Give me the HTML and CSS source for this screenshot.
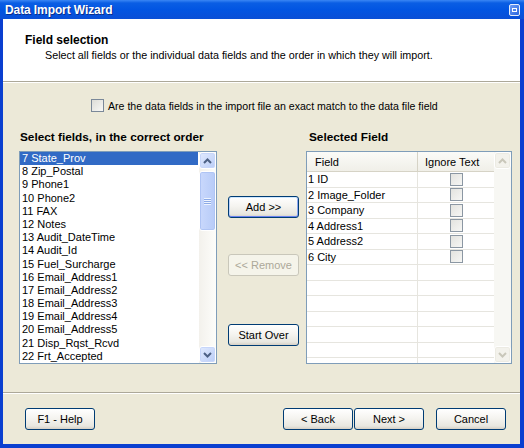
FILE: index.html
```html
<!DOCTYPE html>
<html>
<head>
<meta charset="utf-8">
<title>Data Import Wizard</title>
<link rel="stylesheet" href="styles.css">
</head>
<body>
<div class="window">
  <div class="titlebar">
    <span class="title">Data Import Wizard</span>
    <span class="tb-btn"><span class="tb-glyph"></span></span>
  </div>
  <div class="frame">
    <div class="header">
      <div class="h-title">Field selection</div>
      <div class="h-sub">Select all fields or the individual data fields and the order in which they will import.</div>
    </div>
    <div class="content">
      <div class="match">
        <span class="cb"></span>
        <span class="match-text">Are the data fields in the import file an exact match to the data file field</span>
      </div>
      <div class="panes">
        <div class="left">
          <div class="pane-label">Select fields, in the correct order</div>
          <div class="listbox">
            <ul class="items">
              <li class="sel">7 State_Prov</li>
              <li>8 Zip_Postal</li>
              <li>9 Phone1</li>
              <li>10 Phone2</li>
              <li>11 FAX</li>
              <li>12 Notes</li>
              <li>13 Audit_DateTime</li>
              <li>14 Audit_Id</li>
              <li>15 Fuel_Surcharge</li>
              <li>16 Email_Address1</li>
              <li>17 Email_Address2</li>
              <li>18 Email_Address3</li>
              <li>19 Email_Address4</li>
              <li>20 Email_Address5</li>
              <li>21 Disp_Rqst_Rcvd</li>
              <li>22 Frt_Accepted</li>
            </ul>
            <div class="vs">
              <div class="vs-btn">
                <svg width="9" height="6" viewBox="0 0 9 6"><polyline points="1,5 4.5,1.5 8,5" fill="none" stroke="#4D6185" stroke-width="2"/></svg>
              </div>
              <div class="vs-thumb"><span class="grip"></span></div>
              <div class="vs-track"></div>
              <div class="vs-btn">
                <svg width="9" height="6" viewBox="0 0 9 6"><polyline points="1,1 4.5,4.5 8,1" fill="none" stroke="#4D6185" stroke-width="2"/></svg>
              </div>
            </div>
          </div>
        </div>
        <div class="mid">
          <button class="btn btn-default">Add &gt;&gt;</button>
          <button class="btn btn-disabled remove">&lt;&lt; Remove</button>
          <button class="btn startover">Start Over</button>
        </div>
        <div class="right">
          <div class="pane-label pane-label-right">Selected Field</div>
          <div class="grid">
            <div class="gbody">
              <div class="grow ghead"><div class="c1">Field</div><div class="c2">Ignore Text</div></div>
              <div class="grow"><div class="c1">1 ID</div><div class="c2"><span class="gcb"></span></div></div>
              <div class="grow"><div class="c1">2 Image_Folder</div><div class="c2"><span class="gcb"></span></div></div>
              <div class="grow"><div class="c1">3 Company</div><div class="c2"><span class="gcb"></span></div></div>
              <div class="grow"><div class="c1">4 Address1</div><div class="c2"><span class="gcb"></span></div></div>
              <div class="grow"><div class="c1">5 Address2</div><div class="c2"><span class="gcb"></span></div></div>
              <div class="grow"><div class="c1">6 City</div><div class="c2"><span class="gcb"></span></div></div>
              <div class="grow"><div class="c1"></div><div class="c2"></div></div>
              <div class="grow"><div class="c1"></div><div class="c2"></div></div>
              <div class="grow"><div class="c1"></div><div class="c2"></div></div>
              <div class="grow"><div class="c1"></div><div class="c2"></div></div>
              <div class="grow"><div class="c1"></div><div class="c2"></div></div>
              <div class="grow"><div class="c1"></div><div class="c2"></div></div>
              <div class="grow"><div class="c1"></div><div class="c2"></div></div>
            </div>
            <div class="vs vs-off">
              <div class="vs-btn">
                <svg width="9" height="6" viewBox="0 0 9 6"><polyline points="1,5 4.5,1.5 8,5" fill="none" stroke="#C9C7BA" stroke-width="2"/></svg>
              </div>
              <div class="vs-track"></div>
              <div class="vs-btn">
                <svg width="9" height="6" viewBox="0 0 9 6"><polyline points="1,1 4.5,4.5 8,1" fill="none" stroke="#C9C7BA" stroke-width="2"/></svg>
              </div>
            </div>
          </div>
        </div>
      </div>
    </div>
    <div class="footer">
      <button class="btn fbtn">F1 - Help</button>
      <div class="spacer"></div>
      <button class="btn fbtn back">&lt; Back</button>
      <button class="btn fbtn next">Next &gt;</button>
      <button class="btn fbtn">Cancel</button>
    </div>
  </div>
</div>
</body>
</html>
```
FILE: styles.css
```css
* { box-sizing: border-box; }

body {
  margin: 0;
  width: 524px;
  height: 448px;
  overflow: hidden;
  font-family: "Liberation Sans", Arial, sans-serif;
  font-size: 11px;
  color: #000;
  background: #ECE9D8;
}

.window {
  width: 524px;
  height: 448px;
  display: flex;
  flex-direction: column;
}

.titlebar {
  height: 19px;
  flex: none;
  display: flex;
  align-items: center;
  justify-content: space-between;
  padding: 0 4px 0 5px;
  background: linear-gradient(180deg, #3A86F4 0px, #0A5EE4 3px, #0255E2 50%, #0A4FD6 100%);
  color: #fff;
  font-weight: bold;
  font-size: 12px;
}

.title {
  text-shadow: 1px 1px 0 #0B2F8C;
  letter-spacing: -0.1px;
}

.tb-btn {
  width: 11px;
  height: 12px;
  margin-top: 1px;
  border: 1px solid #E6EEFC;
  border-radius: 2px;
  background: linear-gradient(135deg, #6D9CF4, #2A66DF);
  display: flex;
  align-items: center;
  justify-content: center;
}

.tb-glyph {
  width: 5px;
  height: 4px;
  border: 1px solid #fff;
}

.frame {
  flex: 1;
  display: flex;
  flex-direction: column;
  border-style: solid;
  border-color: #0A3FD0;
  border-width: 0 4px 4px 3px;
  min-height: 0;
}

.header {
  height: 63px;
  flex: none;
  background: #fff;
  border-bottom: 1px solid #ACA899;
  padding: 14px 0 0 22px;
  position: relative;
  z-index: 1;
  box-shadow: 0 1px 0 #fff;
}

.h-title {
  font-weight: bold;
  font-size: 12px;
  line-height: 14px;
}

.h-sub {
  margin-top: 2px;
  padding-left: 20px;
  font-size: 10.75px;
  line-height: 13px;
}

.content {
  flex: 1;
  padding: 17px 8px 0 16px;
  min-height: 0;
}

.match {
  display: flex;
  align-items: center;
  height: 13px;
  padding-left: 72px;
  font-size: 10.6px;
}

.cb {
  width: 13px;
  height: 13px;
  flex: none;
  border: 1px solid #7A8899;
  background: linear-gradient(135deg, #DCDCD7, #F8F8F6);
  margin-right: 4px;
}

.panes {
  display: flex;
  margin-top: 18px;
  align-items: flex-start;
}

.pane-label {
  font-weight: bold;
  font-size: 11.8px;
  line-height: 14px;
  height: 14px;
  margin-bottom: 7px;
  padding-left: 1px;
  white-space: nowrap;
}

.pane-label-right { padding-left: 3px; }

.left { width: 198px; flex: none; }

.listbox {
  height: 213px;
  border: 1px solid #7F9DB9;
  background: #fff;
  display: flex;
}

.items {
  flex: 1;
  list-style: none;
  margin: 0;
  padding: 0;
  overflow: hidden;
}

.items li {
  height: 13.2px;
  line-height: 13.2px;
  padding-left: 2px;
  margin-right: 1px;
  white-space: nowrap;
}

.items li.sel {
  background: #316AC5;
  color: #fff;
}

.vs {
  width: 17px;
  flex: none;
  display: flex;
  flex-direction: column;
  background: linear-gradient(90deg, #F3F1EC, #FDFDFA);
}

.vs-btn {
  height: 17px;
  flex: none;
  border: 1px solid #fff;
  border-radius: 3px;
  background: linear-gradient(135deg, #E1EAFE, #BACDF7);
  box-shadow: inset 0 0 0 1px #C7D6FA;
  display: flex;
  align-items: center;
  justify-content: center;
}

.vs-thumb {
  height: 60px;
  margin-top: 2px;
  flex: none;
  border: 1px solid #fff;
  border-radius: 3px;
  background: linear-gradient(90deg, #C9D8FC, #B7CBF8);
  box-shadow: inset 0 0 0 1px #AFC4F4;
  display: flex;
  align-items: center;
  justify-content: center;
}

.grip {
  width: 7px;
  height: 7px;
  background: repeating-linear-gradient(180deg, #EEF4FE 0 1px, #8CAAE6 1px 2px);
}

.vs-track { flex: 1; }

.vs-off { background: #F7F7F3; }

.vs-off .vs-btn {
  background: #F3F2EC;
  box-shadow: inset 0 0 0 1px #ECEBE3;
}

.mid {
  width: 71px;
  flex: none;
  margin-left: 11px;
  padding-top: 66px;
  display: flex;
  flex-direction: column;
}

.btn {
  font-family: "Liberation Sans", Arial, sans-serif;
  font-size: 11px;
  color: #000;
  height: 22px;
  padding: 0;
  border: 1px solid #003C74;
  border-radius: 3px;
  background: linear-gradient(180deg, #FFFFFF 0%, #F5F4F0 45%, #E8E7E0 85%, #D6D0C5 100%);
  cursor: default;
}

.btn-default {
  box-shadow: inset 0 1px 0 #CEE7FF, inset 0 -1px 0 #6982EE, inset 1px 0 0 #B9D1FA, inset -1px 0 0 #8DA6F0;
}

.btn-disabled {
  border-color: #C9C7BA;
  background: #F5F4EA;
  color: #ACA899;
}

.remove { margin-top: 36px; }
.startover { margin-top: 48px; }

.right {
  width: 206px;
  flex: none;
  margin-left: 7px;
}

.grid {
  height: 213px;
  border: 1px solid #7F9DB9;
  background: #fff;
  display: flex;
}

.gbody {
  flex: 1;
  overflow: hidden;
}

.grow {
  display: flex;
  height: 15.5px;
  border-bottom: 1px solid #E6E5DF;
  align-items: center;
  white-space: nowrap;
}

.grow .c1 {
  width: 111px;
  flex: none;
  height: 100%;
  border-right: 1px solid #E6E5DF;
  padding-left: 1px;
  display: flex;
  align-items: center;
}

.grow .c2 {
  flex: 1;
  height: 100%;
  display: flex;
  align-items: center;
  justify-content: center;
}

.ghead {
  height: 20px;
  background: linear-gradient(180deg, #FBFBF8, #F0EFE8);
  border-bottom: 1px solid #D6D3C6;
}

.ghead .c1 {
  padding-left: 8px;
  border-right-color: #D6D3C6;
}

.ghead .c2 {
  justify-content: flex-start;
  padding-left: 7px;
}

.gcb {
  width: 13px;
  height: 13px;
  border: 1px solid #8B97A3;
  background: linear-gradient(135deg, #E3E3DF, #F6F6F4);
}

.footer {
  height: 52px;
  flex: none;
  border-top: 1px solid #ACA899;
  box-shadow: inset 0 1px 0 #fff;
  display: flex;
  align-items: flex-start;
  padding: 15px 14px 0 22px;
}

.fbtn { width: 70px; }
.spacer { flex: 1; }
.back { margin-right: 1px; }
.next { margin-right: 12px; }
```
